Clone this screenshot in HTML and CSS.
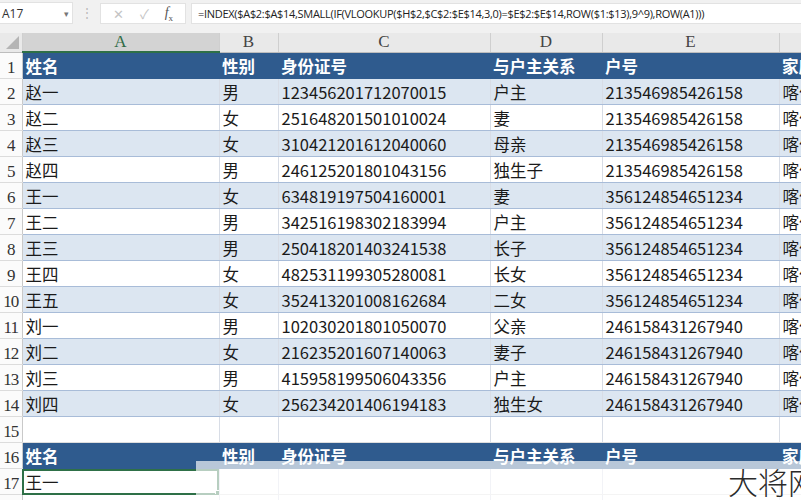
FILE: index.html
```html
<!DOCTYPE html>
<html lang="zh-CN">
  <head>
    <meta charset="UTF-8" />
    <meta name="viewport" content="width=device-width, initial-scale=1.0" />
    <title>户籍表</title>
    <link rel="stylesheet" href="styles.css">
  </head>
  <body>
    <div class="formula-bar">
      <div class="name-box">A17<span class="drop">&#9662;</span></div>
      <div class="grip">&#8942;</div>
      <div class="fx-buttons">
        <span class="btn">&#10005;</span>
        <span class="btn">&#10003;</span>
        <span class="btn fx"><i>f</i><sub>x</sub></span>
      </div>
      <div class="formula">=INDEX($A$2:$A$14,SMALL(IF(VLOOKUP($H$2,$C$2:$E$14,3,0)=$E$2:$E$14,ROW($1:$13),9^9),ROW(A1)))</div>
    </div>

    <div class="sheet">
      <table class="grid">
        <colgroup>
          <col class="c-head" />
          <col class="c-a" />
          <col class="c-b" />
          <col class="c-c" />
          <col class="c-d" />
          <col class="c-e" />
          <col class="c-f" />
        </colgroup>
        <thead>
          <tr class="col-heads">
            <th class="corner"><span class="tri"></span></th>
            <th class="sel">A</th>
            <th>B</th>
            <th>C</th>
            <th>D</th>
            <th>E</th>
            <th></th>
          </tr>
        </thead>
        <tbody>
          <tr class="head"><th>1</th><td>姓名</td><td>性别</td><td>身份证号</td><td>与户主关系</td><td>户号</td><td>家庭住址</td></tr>
          <tr class="band"><th>2</th><td>赵一</td><td>男</td><td>123456201712070015</td><td>户主</td><td>213546985426158</td><td>喀什</td></tr>
          <tr class="plain"><th>3</th><td>赵二</td><td>女</td><td>251648201501010024</td><td>妻</td><td>213546985426158</td><td>喀什</td></tr>
          <tr class="band"><th>4</th><td>赵三</td><td>女</td><td>310421201612040060</td><td>母亲</td><td>213546985426158</td><td>喀什</td></tr>
          <tr class="plain"><th>5</th><td>赵四</td><td>男</td><td>246125201801043156</td><td>独生子</td><td>213546985426158</td><td>喀什</td></tr>
          <tr class="band"><th>6</th><td>王一</td><td>女</td><td>634819197504160001</td><td>妻</td><td>356124854651234</td><td>喀什</td></tr>
          <tr class="plain"><th>7</th><td>王二</td><td>男</td><td>342516198302183994</td><td>户主</td><td>356124854651234</td><td>喀什</td></tr>
          <tr class="band"><th>8</th><td>王三</td><td>男</td><td>250418201403241538</td><td>长子</td><td>356124854651234</td><td>喀什</td></tr>
          <tr class="plain"><th>9</th><td>王四</td><td>女</td><td>482531199305280081</td><td>长女</td><td>356124854651234</td><td>喀什</td></tr>
          <tr class="band"><th>10</th><td>王五</td><td>女</td><td>352413201008162684</td><td>二女</td><td>356124854651234</td><td>喀什</td></tr>
          <tr class="plain"><th>11</th><td>刘一</td><td>男</td><td>102030201801050070</td><td>父亲</td><td>246158431267940</td><td>喀什</td></tr>
          <tr class="band"><th>12</th><td>刘二</td><td>女</td><td>216235201607140063</td><td>妻子</td><td>246158431267940</td><td>喀什</td></tr>
          <tr class="plain"><th>13</th><td>刘三</td><td>男</td><td>415958199506043356</td><td>户主</td><td>246158431267940</td><td>喀什</td></tr>
          <tr class="band last"><th>14</th><td>刘四</td><td>女</td><td>256234201406194183</td><td>独生女</td><td>246158431267940</td><td>喀什</td></tr>
          <tr class="empty"><th>15</th><td></td><td></td><td></td><td></td><td></td><td></td></tr>
          <tr class="head"><th>16</th><td>姓名</td><td>性别</td><td>身份证号</td><td>与户主关系</td><td>户号</td><td>家庭住址</td></tr>
          <tr class="empty current"><th>17</th><td class="active">王一<span class="handle"></span></td><td></td><td></td><td></td><td></td><td></td></tr>
          <tr class="empty"><th>18</th><td></td><td></td><td></td><td></td><td></td><td></td></tr>
        </tbody>
      </table>

      <div class="veil"></div>
      <div class="mark">大将网</div>
    </div>
  </body>
</html>
```

FILE: styles.css
```css
body {
  margin: 0;
  width: 801px;
  height: 500px;
  overflow: hidden;
  background: #fff;
  font-family: "Noto Sans CJK SC", "Noto Sans", sans-serif;
  color: #1a1a1a;
}

/* Formula bar */
.formula-bar {
  height: 33px;
  box-sizing: border-box;
  padding-top: 2px;
  background: #f1f1f1;
  display: flex;
  align-items: flex-start;
  font-family: "Open Sans", "Noto Sans", sans-serif;
  font-size: 12px;
}
.name-box {
  width: 73px;
  height: 22px;
  box-sizing: border-box;
  background: #fff;
  border: 1px solid #e2e2e2;
  border-left: none;
  padding-left: 2px;
  display: flex;
  align-items: center;
  justify-content: space-between;
  color: #333;
}
.name-box .drop {
  font-size: 9px;
  color: #777;
  margin-right: 3px;
}
.grip {
  width: 27px;
  text-align: center;
  line-height: 22px;
  color: #b8b8b8;
  font-size: 12px;
}
.fx-buttons {
  width: 86px;
  height: 21px;
  margin-top: 1px;
  box-sizing: border-box;
  background: #fff;
  border: 1px solid #e2e2e2;
  display: flex;
  align-items: center;
  justify-content: space-around;
  padding: 0 4px;
}
.fx-buttons .btn {
  color: #c4c4c4;
  font-size: 13px;
}
.fx-buttons .fx {
  color: #555;
  font-family: "Liberation Serif", serif;
  font-size: 14px;
}
.fx-buttons .fx sub {
  font-size: 9px;
}
.formula {
  flex: 1;
  height: 21px;
  margin: 1px 0 0 5px;
  box-sizing: border-box;
  background: #fff;
  border: 1px solid #e2e2e2;
  border-right: none;
  padding-left: 6px;
  line-height: 19px;
  font-size: 11px;
  color: #222;
  white-space: nowrap;
  overflow: hidden;
  letter-spacing: -0.3px;
}

/* Sheet grid */
.sheet {
  position: relative;
  height: 467px;
  overflow: hidden;
}
.grid {
  table-layout: fixed;
  border-collapse: collapse;
  width: 881px;
}
.c-head { width: 22px; }
.c-a { width: 197px; }
.c-b { width: 59px; }
.c-c { width: 212px; }
.c-d { width: 112px; }
.c-e { width: 177px; }
.c-f { width: 102px; }

.grid td {
  height: 24px;
  padding: 1px 0 0 3px;
  font-size: 16.5px;
  line-height: 24px;
  white-space: nowrap;
  overflow: hidden;
  vertical-align: middle;
  border-right: 1px solid #d8dde6;
  border-bottom: 1px solid #a8bcd8;
}
.grid tbody th {
  font-family: "Liberation Serif", serif;
  font-weight: normal;
  font-size: 17px;
  color: #333;
  background: #fbfbfb;
  border-right: 1px solid #c9c9c9;
  border-bottom: 1px solid #dcdcdc;
  padding: 0;
  line-height: 20px;
  vertical-align: bottom;
  text-align: center;
  letter-spacing: -1px;
}

/* Column letters */
.col-heads th {
  height: 18px;
  padding: 0;
  background: #e9e9e9;
  border-right: 1px solid #cfcfcf;
  border-bottom: 1px solid #bdbdbd;
  font-family: "Liberation Serif", serif;
  font-weight: normal;
  font-size: 17px;
  line-height: 18px;
  color: #444;
}
.col-heads th.sel {
  background: #d3d3d3;
  color: #2f6b46;
  border-bottom: 2px solid #2e7047;
}
.col-heads th.corner {
  position: relative;
  background: #e9e9e9;
}
.corner .tri {
  position: absolute;
  right: 3px;
  bottom: 3px;
  border-style: solid;
  border-width: 0 0 13px 13px;
  border-color: transparent transparent #b5b5b5 transparent;
}

/* Row styles */
.head td {
  background: #2f5b8e;
  color: #fff;
  font-weight: bold;
  border-right: none;
  border-bottom: 1px solid #2f5b8e;
}
.band td {
  background: #dce6f1;
}
.plain td {
  background: #fff;
}
.empty td {
  border-bottom: 1px solid #dedede;
}
.current th {
  background: #d3d3d3;
  color: #2f6b46;
}
.active {
  position: relative;
  outline: 2px solid #2e7047;
  outline-offset: -2px;
}
.active .handle {
  position: absolute;
  right: -3px;
  bottom: -3px;
  width: 5px;
  height: 5px;
  background: #2e7047;
  border: 1px solid #fff;
}

/* Watermark over the bottom of the sheet */
.veil {
  position: absolute;
  left: 196px;
  top: 428px;
  right: 0;
  bottom: 0;
  background: rgba(255, 255, 255, 0.66);
}
.mark {
  position: absolute;
  left: 728px;
  top: 431px;
  font-size: 30px;
  line-height: 34px;
  font-weight: 300;
  color: #2b2b2b;
  white-space: nowrap;
}
```
